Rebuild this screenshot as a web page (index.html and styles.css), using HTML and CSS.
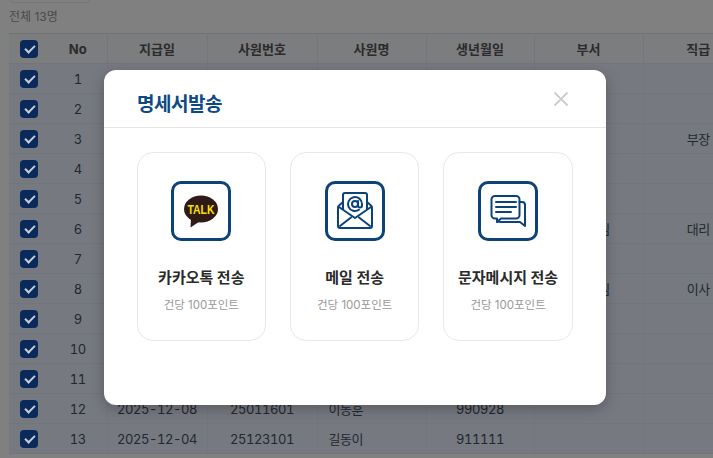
FILE: index.html
```html
<!DOCTYPE html>
<html lang="ko">
<head>
    <meta charset="UTF-8">
    <title>명세서발송</title>
    <link rel="stylesheet" href="styles.css">
</head>
<body>
    <div class="search-stub"></div>
    <div class="total">전체 13명</div>
    <table class="list">
        <colgroup>
            <col class="c-check"><col class="c-no"><col class="c-date"><col class="c-emp">
            <col class="c-name"><col class="c-birth"><col class="c-dept"><col class="c-rank">
        </colgroup>
        <thead>
            <tr><th><span class="check"></span></th><th>No</th><th>지급일</th><th>사원번호</th><th>사원명</th><th>생년월일</th><th>부서</th><th>직급</th></tr>
        </thead>
        <tbody>
            <tr><td><span class="check"></span></td><td>1</td><td></td><td></td><td></td><td></td><td></td><td></td></tr>
            <tr><td><span class="check"></span></td><td>2</td><td></td><td></td><td></td><td></td><td></td><td></td></tr>
            <tr><td><span class="check"></span></td><td>3</td><td></td><td></td><td></td><td></td><td></td><td>부장</td></tr>
            <tr><td><span class="check"></span></td><td>4</td><td></td><td></td><td></td><td></td><td></td><td></td></tr>
            <tr><td><span class="check"></span></td><td>5</td><td></td><td></td><td></td><td></td><td></td><td></td></tr>
            <tr><td><span class="check"></span></td><td>6</td><td></td><td></td><td></td><td></td><td>관리1팀</td><td>대리</td></tr>
            <tr><td><span class="check"></span></td><td>7</td><td></td><td></td><td></td><td></td><td></td><td></td></tr>
            <tr><td><span class="check"></span></td><td>8</td><td></td><td></td><td></td><td></td><td>관리1팀</td><td>이사</td></tr>
            <tr><td><span class="check"></span></td><td>9</td><td></td><td></td><td></td><td></td><td></td><td></td></tr>
            <tr><td><span class="check"></span></td><td>10</td><td></td><td></td><td></td><td></td><td></td><td></td></tr>
            <tr><td><span class="check"></span></td><td>11</td><td></td><td></td><td></td><td></td><td></td><td></td></tr>
            <tr><td><span class="check"></span></td><td>12</td><td>2025-12-08</td><td>25011601</td><td class="name">이동훈</td><td>990928</td><td></td><td></td></tr>
            <tr><td><span class="check"></span></td><td>13</td><td>2025-12-04</td><td>25123101</td><td class="name">길동이</td><td>911111</td><td></td><td></td></tr>
        </tbody>
    </table>

    <div class="modal">
        <div class="modal-head">
            <h2>명세서발송</h2>
            <svg class="close" width="16" height="16" viewBox="0 0 16 16"><path d="M1.500 1.500l13 13M14.500 1.500l-13 13"/></svg>
        </div>
        <div class="modal-body">
            <div class="card">
                <div class="icon-box">
                    <svg width="54" height="54" viewBox="3 3 54 54">
                        <ellipse cx="30" cy="28" rx="17" ry="13.500" fill="#2f1a16"/>
                        <path d="M20 37l-.5 9.500 9-6z" fill="#2f1a16"/>
                        <text class="talk" x="30" y="33" text-anchor="middle" textLength="27" lengthAdjust="spacingAndGlyphs">TALK</text>
                    </svg>
                </div>
                <div class="card-title">카카오톡 전송</div>
                <div class="card-sub">건당 100포인트</div>
            </div>
            <div class="card">
                <div class="icon-box">
                    <svg class="line" width="54" height="54" viewBox="3 3 54 54">
                        <path d="M18 28V14a2 2 0 0 1 2-2h20a2 2 0 0 1 2 2v14"/>
                        <path d="M18 21l-4 3.500a2 2 0 0 0-1 2V45a2 2 0 0 0 2 2h30a2 2 0 0 0 2-2V26.500a2 2 0 0 0-1-2L42 21"/>
                        <path d="M14 26l16 11 16-11M15 45l11-8.500M45 45l-11-8.500"/>
                        <circle cx="30" cy="23" r="3"/>
                        <path d="M33 20v4.500a2 2 0 0 0 4 0V23a7 7 0 1 0-3 5.800"/>
                    </svg>
                </div>
                <div class="card-title">메일 전송</div>
                <div class="card-sub">건당 100포인트</div>
            </div>
            <div class="card">
                <div class="icon-box">
                    <svg class="line" width="54" height="54" viewBox="3 3 54 54">
                        <path d="M17 15h21a3.500 3.500 0 0 1 3.500 3.500V34a3.500 3.500 0 0 1-3.500 3.500H23l-4 3.500v-3.500h-2a3.500 3.500 0 0 1-3.500-3.500V18.500A3.500 3.500 0 0 1 17 15z"/>
                        <path d="M41.500 21H44a3 3 0 0 1 3 3v21l-5-4H23l-4-.5"/>
                        <path d="M18 21h20M18 26h20M18 31h15"/>
                    </svg>
                </div>
                <div class="card-title">문자메시지 전송</div>
                <div class="card-sub">건당 100포인트</div>
            </div>
        </div>
    </div>
</body>
</html>
```

FILE: styles.css
```css
body {
    margin: 0;
    height: 458px;
    overflow: hidden;
    position: relative;
    background: #808080;
    font-family: Inter, "Noto Sans CJK KR", sans-serif;
    font-size: 13px;
    color: #23272e;
}
.search-stub {
    width: 78px;
    height: 2px;
    margin-left: 10px;
    border: 1px solid #777;
    border-top: 0;
    border-radius: 0 0 6px 6px;
}
.total {
    height: 30px;
    margin-left: 9px;
    line-height: 28px;
    font-size: 12px;
    color: #4a4a4a;
}
.list {
    margin-left: 9px;
    width: 744px;
    table-layout: fixed;
    border-collapse: collapse;
    border-top: 1px solid #6f7174;
    background: #767a80;
    font-variant-numeric: tabular-nums;
}
.c-check { width: 40px; }
.c-no { width: 58px; }
.c-date { width: 100px; }
.c-emp { width: 110px; }
.c-name { width: 109px; }
.c-birth { width: 108px; }
.c-dept { width: 109px; }
.c-rank { width: 110px; }
.list th,.list td {
    height: 29px;
    padding: 0;
    text-align: center;
    vertical-align: middle;
    border-bottom: 1px solid #72757a;
    border-left: 1px solid #73767c;
}
.list td {
    letter-spacing: -0.45px;
}
.list td.name {
    text-align: left;
    padding-left: 11px;
}
.list th {
    background: #7c7d7f;
    font-size: 13px;
    font-weight: 700;
    color: #2b2b2b;
}
.list th:first-child,.list td:first-child,
.list th:nth-child(2),.list td:nth-child(2) {
    border-left: 0;
}
.check {
    display: block;
    position: relative;
    width: 18px;
    height: 18px;
    margin: 0 auto;
    border-radius: 4px;
    background: #0b2a5c;
}
.check::after {
    content: "";
    position: absolute;
    left: 4.500px;
    top: 5px;
    width: 8px;
    height: 4px;
    border-left: 2px solid #c9ccd4;
    border-bottom: 2px solid #c9ccd4;
    transform: rotate(-45deg);
}
.modal {
    position: absolute;
    left: 104px;
    top: 70px;
    width: 502px;
    height: 335px;
    background: #fff;
    border-radius: 12px;
    box-shadow: 0 4px 14px rgba(0,0,0,0.25);
}
.modal-head {
    height: 57px;
    padding: 0 37px 0 33px;
    border-bottom: 1px solid #e5e5e5;
    display: flex;
    align-items: center;
    justify-content: space-between;
}
.modal-head h2 {
    margin: 7px 0 0;
    font-size: 19px;
    letter-spacing: -0.5px;
    font-weight: 700;
    color: #0d4a85;
}
.close {
    fill: none;
    stroke: #ccc;
    stroke-width: 1.800;
}
.modal-body {
    padding: 24px 0 24px 32.600px;
    display: grid;
    grid-template-columns: repeat(3, 129.400px);
    gap: 24px;
}
.card {
    height: 189px;
    box-sizing: border-box;
    padding-top: 28px;
    border: 1px solid #e8e8e8;
    border-radius: 16px;
    text-align: center;
}
.icon-box {
    width: 54px;
    height: 54px;
    margin: 0 auto;
    border: 3px solid #0b4278;
    border-radius: 10px;
}
.icon-box svg {
    display: block;
}
.talk {
    font-family: "Liberation Sans", sans-serif;
    font-size: 13px;
    font-weight: 700;
    fill: #fae100;
}
.line {
    fill: none;
    stroke: #0b4278;
    stroke-width: 2;
    stroke-linecap: round;
    stroke-linejoin: round;
}
.card-title {
    margin-top: 25px;
    line-height: 24px;
    font-size: 15px;
    font-weight: 700;
    color: #2a2a2a;
}
.card-sub {
    margin-top: 6px;
    line-height: 18px;
    font-size: 11.500px;
    color: #999;
}
```
